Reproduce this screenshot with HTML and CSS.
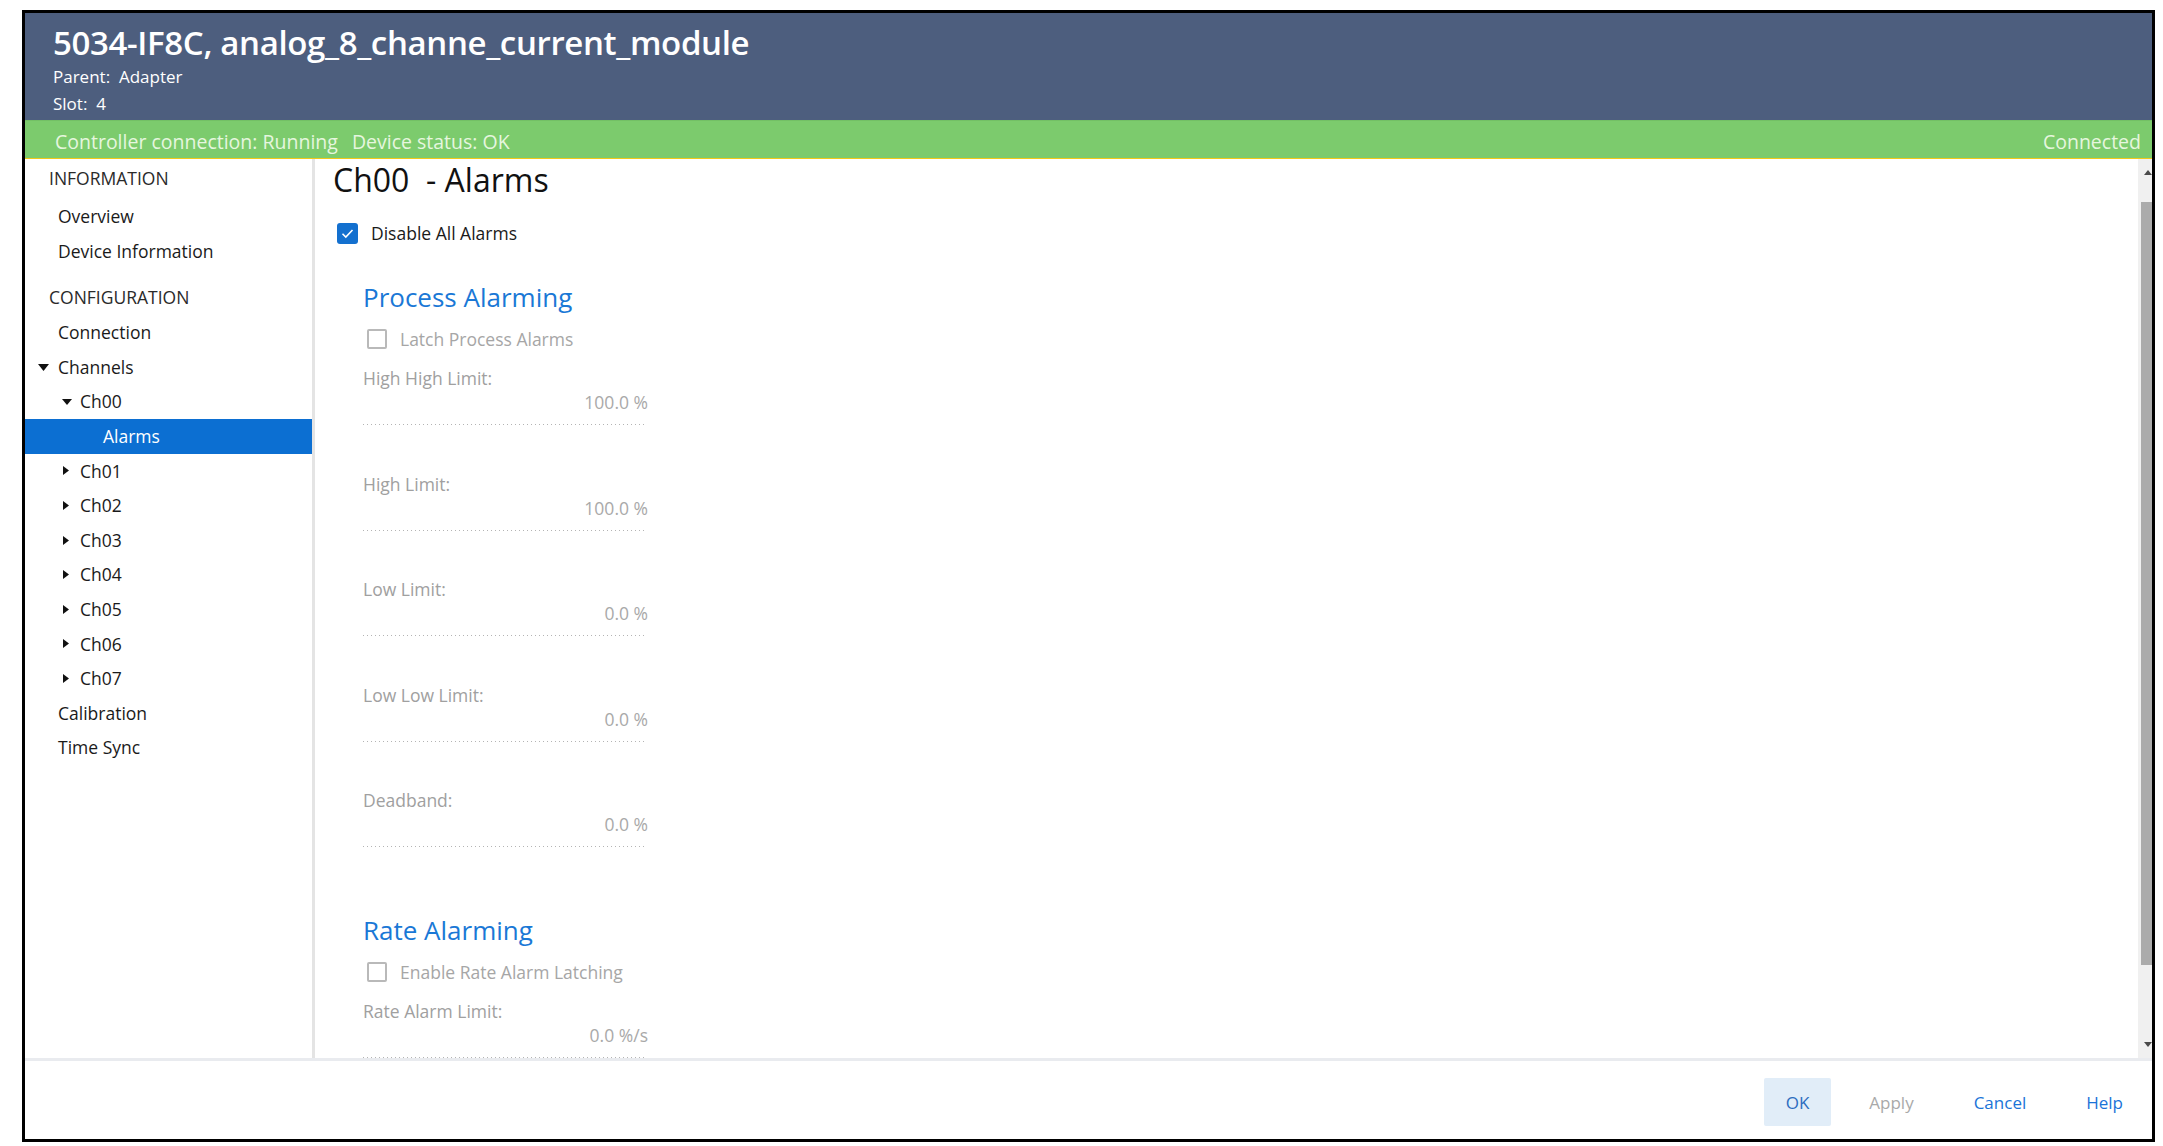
FILE: index.html
```html
<!DOCTYPE html>
<html>

<head>
   <title>5034-IF8C Module Properties</title>
   <link rel="stylesheet" href="styles.css">
</head>

<body>
   <div class="window">
      <div class="header">
         <h1 class="title">5034-IF8C, analog_8_channe_current_module</h1>
         <div class="meta">Parent:&nbsp; Adapter</div>
         <div class="meta">Slot:&nbsp; 4</div>
      </div>

      <div class="status-bar">
         <div>Controller connection: Running<span class="status-gap">Device status: OK</span></div>
         <div>Connected</div>
      </div>

      <div class="main">
         <div class="sidebar">
            <div class="nav-heading first">INFORMATION</div>
            <div class="nav-item level1">Overview</div>
            <div class="nav-item level1">Device Information</div>

            <div class="nav-heading second">CONFIGURATION</div>
            <div class="nav-item level1">Connection</div>
            <div class="nav-item level1 toggle">
               <span class="caret"><svg width="11" height="7" viewBox="0 0 11 7"><polygon points="0,0 11,0 5.5,7" fill="#111"/></svg></span>Channels
            </div>
            <div class="nav-item level2">
               <span class="caret"><svg width="10" height="6" viewBox="0 0 10 6"><polygon points="0,0 10,0 5,6" fill="#111"/></svg></span>Ch00
            </div>
            <div class="nav-item level3 selected">Alarms</div>
            <div class="nav-item level2">
               <span class="caret right"><svg width="6" height="9" viewBox="0 0 6 9"><polygon points="0,0 6,4.5 0,9" fill="#111"/></svg></span>Ch01
            </div>
            <div class="nav-item level2">
               <span class="caret right"><svg width="6" height="9" viewBox="0 0 6 9"><polygon points="0,0 6,4.5 0,9" fill="#111"/></svg></span>Ch02
            </div>
            <div class="nav-item level2">
               <span class="caret right"><svg width="6" height="9" viewBox="0 0 6 9"><polygon points="0,0 6,4.5 0,9" fill="#111"/></svg></span>Ch03
            </div>
            <div class="nav-item level2">
               <span class="caret right"><svg width="6" height="9" viewBox="0 0 6 9"><polygon points="0,0 6,4.5 0,9" fill="#111"/></svg></span>Ch04
            </div>
            <div class="nav-item level2">
               <span class="caret right"><svg width="6" height="9" viewBox="0 0 6 9"><polygon points="0,0 6,4.5 0,9" fill="#111"/></svg></span>Ch05
            </div>
            <div class="nav-item level2">
               <span class="caret right"><svg width="6" height="9" viewBox="0 0 6 9"><polygon points="0,0 6,4.5 0,9" fill="#111"/></svg></span>Ch06
            </div>
            <div class="nav-item level2">
               <span class="caret right"><svg width="6" height="9" viewBox="0 0 6 9"><polygon points="0,0 6,4.5 0,9" fill="#111"/></svg></span>Ch07
            </div>
            <div class="nav-item level1">Calibration</div>
            <div class="nav-item level1">Time Sync</div>
         </div>

         <div class="content">
            <h2 class="page-title">Ch00&nbsp; - Alarms</h2>

            <div class="check-row main-check">
               <span class="checkbox checked"><svg width="21" height="21" viewBox="0 0 21 21"><path d="M5.5 10.8 L8.8 14 L15.5 7" fill="none" stroke="#fff" stroke-width="1.6"/></svg></span>
               <span>Disable All Alarms</span>
            </div>

            <div class="group">
               <h3 class="section-title">Process Alarming</h3>
               <div class="check-row disabled">
                  <span class="checkbox"></span>
                  <span>Latch Process Alarms</span>
               </div>

               <div class="field">
                  <div class="field-label">High High Limit:</div>
                  <div class="field-value">100.0 %</div>
               </div>
               <div class="field">
                  <div class="field-label">High Limit:</div>
                  <div class="field-value">100.0 %</div>
               </div>
               <div class="field">
                  <div class="field-label">Low Limit:</div>
                  <div class="field-value">0.0 %</div>
               </div>
               <div class="field">
                  <div class="field-label">Low Low Limit:</div>
                  <div class="field-value">0.0 %</div>
               </div>
               <div class="field">
                  <div class="field-label">Deadband:</div>
                  <div class="field-value">0.0 %</div>
               </div>

               <h3 class="section-title rate">Rate Alarming</h3>
               <div class="check-row disabled">
                  <span class="checkbox"></span>
                  <span>Enable Rate Alarm Latching</span>
               </div>
               <div class="field">
                  <div class="field-label">Rate Alarm Limit:</div>
                  <div class="field-value">0.0 %/s</div>
               </div>
            </div>
         </div>

         <div class="scrollbar">
            <div class="sb-arrow up"></div>
            <div class="sb-thumb"></div>
            <div class="sb-fill"></div>
            <div class="sb-arrow down"></div>
         </div>
      </div>

      <div class="footer">
         <button class="btn primary">OK</button>
         <button class="btn disabled">Apply</button>
         <button class="btn">Cancel</button>
         <button class="btn">Help</button>
      </div>
   </div>
</body>

</html>
```

FILE: styles.css
```css
body {
   margin: 0;
   background-color: #fff;
   font-family: 'Open Sans', 'Noto Sans', Arial, sans-serif;
   color: #1a1a1a;
}

.window {
   margin: 10px 0 0 22px;
   width: 2133px;
   height: 1132px;
   border: 3px solid #000;
   box-sizing: border-box;
   display: flex;
   flex-direction: column;
   overflow: hidden;
}

/* top banner */
.header {
   height: 107px;
   flex-shrink: 0;
   box-sizing: border-box;
   padding: 10px 0 0 28px;
   background-color: #4d5e7e;
   color: #fff;
}

.title {
   margin: 0;
   font-size: 33px;
   font-weight: 600;
   letter-spacing: -0.35px;
   line-height: 40px;
}

.meta {
   font-size: 17px;
   line-height: 27px;
}

.status-bar {
   height: 39px;
   flex-shrink: 0;
   box-sizing: border-box;
   padding: 4px 11px 0 30px;
   display: flex;
   justify-content: space-between;
   background-color: #7ccb6d;
   border-top: 1px solid #73c065;
   border-bottom: 1px solid #f2c81a;
   color: #e6f6df;
   font-size: 19.5px;
   line-height: 33px;
}

.status-gap {
   margin-left: 14px;
}

/* body */
.main {
   flex: 1;
   display: flex;
   min-height: 0;
}

.sidebar {
   width: 287px;
   flex-shrink: 0;
   border-right: 3px solid #e4e4e4;
   padding-top: 2px;
   font-size: 17.5px;
}

.nav-heading {
   height: 35px;
   line-height: 35px;
   padding-left: 24px;
   color: #2a2a2a;
}

.nav-heading.first {
   margin-bottom: 3px;
}

.nav-heading.second {
   margin-top: 12px;
}

.nav-item {
   height: 34.6px;
   line-height: 34.6px;
   display: flex;
   align-items: center;
   color: #1a1a1a;
}

.nav-item.level1 {
   padding-left: 33px;
}

.nav-item.level1.toggle {
   padding-left: 13px;
}

.nav-item.level1.toggle .caret {
   width: 20px;
}

.nav-item.level2 {
   padding-left: 37px;
}

.nav-item.level3 {
   padding-left: 78px;
}

.caret {
   width: 18px;
   display: flex;
   align-items: center;
}

.caret.right {
   padding-left: 1px;
   width: 17px;
}

.nav-item.selected {
   background-color: #0c6fd2;
   color: #fff;
}

.content {
   flex: 1;
   overflow: hidden;
   padding-left: 18px;
}

.page-title {
   margin: 0;
   padding-top: 2px;
   font-size: 32px;
   font-weight: 400;
   line-height: 38px;
   color: #111;
}

.check-row {
   display: flex;
   align-items: center;
   font-size: 17.5px;
   line-height: 21px;
}

.main-check {
   margin: 24px 0 0 4px;
   color: #1a1a1a;
}

.checkbox {
   width: 20px;
   height: 20px;
   box-sizing: border-box;
   border: 2px solid #b9b9b9;
   border-radius: 2px;
   margin-right: 13px;
   flex-shrink: 0;
}

.checkbox.checked {
   width: 21px;
   height: 21px;
   border: none;
   border-radius: 3px;
   background-color: #1370cf;
}

.checkbox svg {
   display: block;
}

.group {
   padding-left: 30px;
}

.section-title {
   margin: 36px 0 0;
   font-size: 26px;
   font-weight: 400;
   line-height: 34px;
   color: #1a78d6;
}

/* follows a field, so its margin collapses with the field's bottom margin */
.section-title.rate {
   margin-top: 66px;
}

.check-row.disabled {
   margin: 14px 0 0 4px;
   color: #a6a6a6;
   line-height: 22px;
}

.field {
   width: 285px;
   margin-top: 16px;
   margin-bottom: 46.5px;
   font-size: 17.5px;
   line-height: 24px;
}

.field + .field {
   margin-top: 0;
}

.field-label {
   color: #a0a0a0;
}

.field-value {
   width: 285px;
   padding-bottom: 11px;
   text-align: right;
   color: #a9a9a9;
   white-space: nowrap;
   background-image: repeating-linear-gradient(to right, #b4b4b4 0, #b4b4b4 1px, transparent 1px, transparent 4px);
   background-size: 281px 1px;
   background-position: left bottom;
   background-repeat: no-repeat;
}

/* scroll bar */
.scrollbar {
   width: 14px;
   flex-shrink: 0;
   background-color: #f0f0f0;
   display: flex;
   flex-direction: column;
}

.sb-arrow {
   height: 30px;
   flex-shrink: 0;
   position: relative;
}

.sb-arrow::after {
   content: '';
   position: absolute;
   right: 0;
   border-left: 4px solid transparent;
   border-right: 4px solid transparent;
}

.sb-arrow.up::after {
   top: 11px;
   border-bottom: 5px solid #4a4a4a;
}

.sb-arrow.down::after {
   bottom: 11px;
   border-top: 5px solid #4a4a4a;
}

.sb-thumb {
   margin: 13px 0 0 3px;
   height: 763px;
   background-color: #ababab;
}

.sb-fill {
   flex: 1;
}

.footer {
   height: 81px;
   flex-shrink: 0;
   box-sizing: border-box;
   border-top: 3px solid #e9ebef;
   padding: 17px 7px 0 0;
   display: flex;
   justify-content: flex-end;
   align-items: flex-start;
   gap: 16px;
}

.btn {
   height: 48px;
   padding: 0 22px;
   border: none;
   border-radius: 2px;
   background: transparent;
   font-family: 'Open Sans', 'Noto Sans', Arial, sans-serif;
   font-size: 17px;
   color: #1a73d8;
   cursor: pointer;
}

.btn.primary {
   background-color: #e1edf8;
   color: #2c6cbf;
}

.btn.disabled {
   color: #a9a9a9;
}
```
